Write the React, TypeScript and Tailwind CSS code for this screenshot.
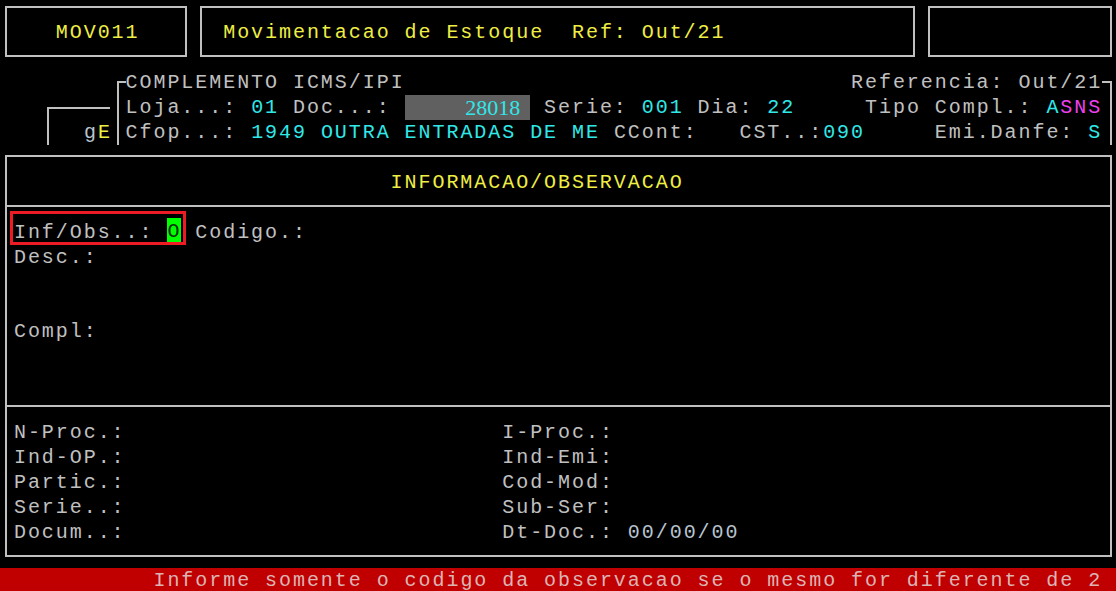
import React from 'react';

const mono =
  "font-['Liberation_Mono',monospace] text-[20px] leading-[25px] tracking-[1.95px] whitespace-pre";

function pad(s: string, n: number) {
  return s + ' '.repeat(Math.max(0, n - s.length));
}

const bottomRows: [string, string][] = [
  ['N-Proc.:', 'I-Proc.:'],
  ['Ind-OP.:', 'Ind-Emi:'],
  ['Partic.:', 'Cod-Mod:'],
  ['Serie..:', 'Sub-Ser:'],
  ['Docum..:', 'Dt-Doc.:'],
];

export default function App() {
  return (
    <div className="w-[1116px] h-[591px] bg-black overflow-hidden flex flex-col text-[#c0c0c0] font-['Liberation_Mono',monospace]">
      {/* Top boxes */}
      <div className="flex pt-[6px] pl-[5px] gap-[13px]">
        <div className="w-[182px] h-[51px] shrink-0 border-2 border-[#c0c0c0] flex items-center pl-[48.8px] pt-[2px]">
          <div className={`${mono} h-[25px] text-[#eeee44]`}>MOV011</div>
        </div>
        <div className="w-[715px] h-[51px] shrink-0 border-2 border-[#c0c0c0] flex items-center pl-[21.2px] pt-[2px]">
          <div className={`${mono} h-[25px] text-[#eeee44]`}>Movimentacao de Estoque  Ref: Out/21</div>
        </div>
        <div className="w-[184px] h-[51px] shrink-0 border-2 border-[#c0c0c0]" />
      </div>

      {/* Header block */}
      <div className="flex mt-[13px] h-[75px]">
        <div className="w-[47px] shrink-0" />
        <div className="w-[63px] shrink-0 mt-[37px] h-[38px] border-t-2 border-l-2 border-[#c0c0c0] flex justify-end pt-[11px]">
          <div className={`${mono} h-[25px] -mr-[2px]`}>
            <span className="text-[#b8c4d0]">g</span>
            <span className="text-[#eeee44]">E</span>
          </div>
        </div>
        <div className="w-[7px] shrink-0" />
        <div className="w-[995px] shrink-0 pt-[11px]">
          <div className="h-[64px] border-t-2 border-l-2 border-r-2 border-[#c0c0c0] pl-[6.55px] pr-[8px]">
            <div className={`${mono} h-[25px] -mt-[13px] bg-black text-[#c0c0c0]`}>
              {'COMPLEMENTO ICMS/IPI' + ' '.repeat(32) + 'Referencia: Out/21'}
            </div>
            <div className={`${mono} h-[25px]`}>
              <span className="text-[#c0c0c0]">{'Loja...: '}</span>
              <span className="text-[#30e8e8]">{'01'}</span>
              <span className="text-[#c0c0c0]">{' Doc...: '}</span>
              <span className="inline-block align-top w-[125.55px] h-[25px] bg-[#606060] text-right pr-[10px] font-['Liberation_Serif',serif] text-[22px] leading-[25px] tracking-normal text-[#30e8e8]">
                28018
              </span>
              <span className="text-[#c0c0c0]">{' Serie: '}</span>
              <span className="text-[#30e8e8]">{'001'}</span>
              <span className="text-[#c0c0c0]">{' Dia: '}</span>
              <span className="text-[#30e8e8]">{'22'}</span>
              <span className="text-[#c0c0c0]">{'     Tipo Compl.: '}</span>
              <span className="text-[#30e8e8]">{'A'}</span>
              <span className="text-[#f040f0]">{'SNS'}</span>
            </div>
            <div className={`${mono} h-[25px]`}>
              <span className="text-[#c0c0c0]">{'Cfop...: '}</span>
              <span className="text-[#30e8e8]">{'1949 OUTRA ENTRADAS DE ME'}</span>
              <span className="text-[#c0c0c0]">{' CCont:   CST..:'}</span>
              <span className="text-[#30e8e8]">{'090'}</span>
              <span className="text-[#c0c0c0]">{'     Emi.Danfe: '}</span>
              <span className="text-[#30e8e8]">{'S'}</span>
            </div>
          </div>
        </div>
      </div>

      {/* Main box */}
      <div className="ml-[5px] mt-[10px] w-[1107px] h-[402px] border-2 border-[#c0c0c0] flex flex-col">
        <div className="h-[50px] border-b-2 border-[#c0c0c0] pt-[13px] pl-[383.6px]">
          <div className={`${mono} h-[25px] text-[#eeee44]`}>INFORMACAO/OBSERVACAO</div>
        </div>
        <div className="relative h-[200px] border-b-2 border-[#c0c0c0] pt-[13px] pl-[6.95px]">
          <div className={`${mono} h-[25px]`}>
            <span>{'Inf/Obs..: '}</span>
            <span className="inline-block align-top w-[13.95px] h-[24px] -mt-[2px] bg-[#00ff00] text-[#0a2a0a] leading-[27px]">O</span>
            <span>{' Codigo.:'}</span>
          </div>
          <div className={`${mono} h-[25px]`}>Desc.:</div>
          <div className={`${mono} h-[25px] mt-[49px]`}>Compl:</div>
          <div className="absolute left-[3px] top-[4px] w-[176px] h-[34px] border-[3px] border-[#ed1c24]" />
        </div>
        <div className="h-[148px] pt-[13px] pl-[6.95px]">
          {bottomRows.map(([l, r], i) => (
            <div key={i} className={`${mono} h-[25px]`}>
              <span>{pad(l, 35) + r}</span>
              {i === 4 && <span className="text-[#b8c4d0]">{' 00/00/00'}</span>}
            </div>
          ))}
        </div>
      </div>

      {/* Status bar */}
      <div className="mt-[11px] h-[23px] w-full bg-[#c00000] overflow-hidden pl-[153.45px]">
        <div className={`${mono} h-[25px] text-[#dcb4b4]`}>
          Informe somente o codigo da observacao se o mesmo for diferente de 2
        </div>
      </div>
    </div>
  );
}
